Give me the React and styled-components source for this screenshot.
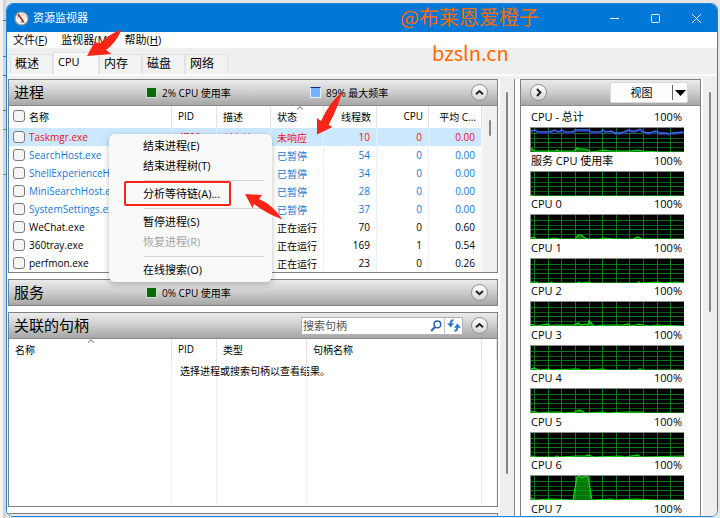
import React from 'react'
import styled, { createGlobalStyle } from 'styled-components';

const processes = [
    { name: 'Taskmgr.exe', pid: '4700', desc: '任务管...', status: '未响应', threads: 10, cpu: 0, avg: '0.00', tone: 'hung' },
    { name: 'SearchHost.exe', status: '已暂停', threads: 54, cpu: 0, avg: '0.00', tone: 'paused' },
    { name: 'ShellExperienceHost.exe', status: '已暂停', threads: 34, cpu: 0, avg: '0.00', tone: 'paused' },
    { name: 'MiniSearchHost.exe', status: '已暂停', threads: 28, cpu: 0, avg: '0.00', tone: 'paused' },
    { name: 'SystemSettings.exe', status: '已暂停', threads: 37, cpu: 0, avg: '0.00', tone: 'paused' },
    { name: 'WeChat.exe', status: '正在运行', threads: 70, cpu: 0, avg: '0.60' },
    { name: '360tray.exe', status: '正在运行', threads: 169, cpu: 1, avg: '0.54' },
    { name: 'perfmon.exe', status: '正在运行', threads: 23, cpu: 0, avg: '0.26' },
]

const graphs = [
    {
        title: 'CPU - 总计',
        line: '0,20 2,22 4,23 24,23 26,22 28,23 43,23 46,20 49,21 53,21 57,22 60,24 74,22 80,23 100,23 107,22 112,23 130,24 153,24',
        frequency: '0,3 4,2 7,4 19,4 21,3 24,2 27,4 31,2 34,4 41,4 45,2 57,2 60,4 69,4 72,2 75,4 80,3 84,5 89,5 93,4 97,2 101,3 105,3 109,1 112,4 118,5 125,3 128,5 135,5 138,6 141,5 153,4',
    },
    { title: '服务 CPU 使用率', line: '0,23 3,24 153,24' },
    { title: 'CPU 0', line: '0,23 3,22 5,24 18,24 23,23 29,24 44,24 47,20 50,20 54,23 58,24 70,24 72,23 84,24 102,24 107,22 111,24 153,24' },
    { title: 'CPU 1', line: '0,23 5,23 7,24 19,24 20,23 22,24 46,24 48,23 50,24 58,23 60,24 106,24 108,23 110,24 128,23 132,24 145,23 153,24' },
    { title: 'CPU 2', line: '0,22 5,24 17,22 19,24 24,23 43,23 47,21 50,23 54,22 57,23 58,19 61,22 63,24 74,23 92,23 97,22 100,24 108,22 112,23 120,24 126,23 153,24' },
    { title: 'CPU 3', line: '0,23 3,22 8,24 18,23 20,24 43,23 48,23 50,24 72,23 76,24 106,24 109,23 112,24 153,24' },
    { title: 'CPU 4', line: '0,22 5,23 7,24 20,23 30,23 33,24 44,23 48,21 51,22 54,24 72,23 76,24 95,23 111,23 113,24 153,24' },
    { title: 'CPU 5', line: '0,23 6,24 24,24 26,23 28,24 46,23 54,23 57,22 60,23 63,24 90,23 94,24 107,22 110,24 153,23' },
    { title: 'CPU 6', line: '0,22 4,24 20,23 42,24 46,1 49,0 51,2 54,0 57,1 61,24 80,23 84,24 104,23 125,24 153,24' },
    { title: 'CPU 7' },
]

function Chevron({ d }) {
    return (
        <svg width="11" height="11" viewBox="0 0 11 11" fill="none" stroke="#222" strokeWidth="2" aria-hidden="true">
            <path d={d} />
        </svg>
    )
}

const up = 'M2 7.2 5.5 4 9 7.2'
const down = 'M2 4 5.5 7.2 9 4'
const right = 'M4 2 7.4 5.5 4 9'

function SortMark() {
    return (
        <Sort width="8" height="4" viewBox="0 0 8 4" fill="none" stroke="#666" aria-hidden="true">
            <path d="M1 3.5 4 .7 7 3.5" />
        </Sort>
    )
}

function Graph({ title, line, frequency }) {
    return (
        <GraphBlock>
            <GraphLabel><span>{title}</span><span>100%</span></GraphLabel>
            {line && (
                <Plot viewBox="0 0 153 24" preserveAspectRatio="none" role="img" aria-label={title}>
                    <rect width="153" height="24" fill="#000" />
                    <path d="M0 10.5H153M0 19.5H153" stroke="#065c12" />
                    <path d="M0 5.5H153M0 14.5H153" stroke="#087a1a" />
                    <path d="M3.5 0V24M17.5 0V24M30.5 0V24M44.5 0V24M58.5 0V24M71.5 0V24M85.5 0V24M98.5 0V24M112.5 0V24M126.5 0V24M139.5 0V24" stroke="#087a1a" />
                    <polygon points={`0,24 ${line} 153,24`} fill="#0a9c12" fillOpacity=".75" />
                    <polyline points={line} fill="none" stroke="#0be00b" strokeWidth="1.2" />
                    {frequency && <polyline points={frequency} fill="none" stroke="#3c1a8c" transform="translate(0 1.5)" />}
                    {frequency && <polyline points={frequency} fill="none" stroke="#2f6df2" strokeWidth="1.4" />}
                </Plot>
            )}
        </GraphBlock>
    )
}

function ContextMenu() {
    return (
        <Menu role="menu">
            <MenuItem role="menuitem">结束进程(E)</MenuItem>
            <MenuItem role="menuitem">结束进程树(T)</MenuItem>
            <Separator />
            <MenuItem role="menuitem" $marked>分析等待链(A)...</MenuItem>
            <Separator />
            <MenuItem role="menuitem">暂停进程(S)</MenuItem>
            <MenuItem role="menuitem" disabled>恢复进程(R)</MenuItem>
            <Separator />
            <MenuItem role="menuitem">在线搜索(O)</MenuItem>
        </Menu>
    )
}

function App() {
    return (
        <Desktop>
            <GlobalStyle />
            <Window>
                <TitleBar>
                    <svg width="15" height="15" viewBox="0 0 15 15" aria-hidden="true">
                        <circle cx="7.5" cy="7.5" r="6.4" fill="#fff" stroke="#a9a09a" strokeWidth="1.3" />
                        <path d="M3 8A4.6 4.6 0 0 1 12 7" fill="none" stroke="#b9b9b9" />
                        <path d="m4 3.4 5.6 7.3" stroke="#c62818" strokeWidth="1.8" />
                        <path d="M6.5 11h3.8" stroke="#555" />
                    </svg>
                    <Title>资源监视器</Title>
                    <WindowButton aria-label="最小化"><svg width="11" height="11" viewBox="0 0 11 11" stroke="#fff" fill="none"><path d="M1 5.5h9" /></svg></WindowButton>
                    <WindowButton aria-label="最大化"><svg width="11" height="11" viewBox="0 0 11 11" stroke="#fff" fill="none"><rect x="1.5" y="1.5" width="8" height="8" rx="1" /></svg></WindowButton>
                    <WindowButton aria-label="关闭"><svg width="11" height="11" viewBox="0 0 11 11" stroke="#fff" fill="none"><path d="m1 1 9 9M10 1 1 10" /></svg></WindowButton>
                </TitleBar>
                <MenuBar>
                    <button>文件(<u>F</u>)</button>
                    <button>监视器(<u>M</u>)</button>
                    <button>帮助(<u>H</u>)</button>
                </MenuBar>
                <Tabs role="tablist">
                    <Tab role="tab">概述</Tab>
                    <Tab role="tab" aria-selected="true" $active>CPU</Tab>
                    <Tab role="tab">内存</Tab>
                    <Tab role="tab">磁盘</Tab>
                    <Tab role="tab">网络</Tab>
                </Tabs>
                <Content>
                    <Lists>
                        <Panel>
                            <PanelHeader>
                                <PanelTitle>进程</PanelTitle>
                                <Meter><Swatch />2% CPU 使用率</Meter>
                                <Meter><Swatch $blue />89% 最大频率</Meter>
                                <RoundButton aria-label="折叠进程"><Chevron d={up} /></RoundButton>
                            </PanelHeader>
                            <ListBody>
                                <Table>
                                    <colgroup>
                                        <col />
                                        <Col $w={45} />
                                        <Col $w={54} />
                                        <Col $w={53} />
                                        <Col $w={53} />
                                        <Col $w={52} />
                                        <Col $w={53} />
                                    </colgroup>
                                    <thead>
                                        <tr>
                                            <NameHead><label><Check type="checkbox" />名称</label></NameHead>
                                            <th>PID</th>
                                            <th>描述</th>
                                            <th>状态<SortMark /></th>
                                            <NumberHead>线程数</NumberHead>
                                            <NumberHead>CPU</NumberHead>
                                            <NumberHead>平均 C...</NumberHead>
                                        </tr>
                                    </thead>
                                    <tbody>
                                        {processes.map((p) => (
                                            <Row key={p.name} $tone={p.tone}>
                                                <NameCell><label><Check type="checkbox" />{p.name}</label></NameCell>
                                                <td>{p.pid}</td>
                                                <td>{p.desc}</td>
                                                <td>{p.status}</td>
                                                <NumberCell>{p.threads}</NumberCell>
                                                <NumberCell>{p.cpu}</NumberCell>
                                                <NumberCell>{p.avg}</NumberCell>
                                            </Row>
                                        ))}
                                    </tbody>
                                </Table>
                                <ListScroll><Thumb $h={16} /></ListScroll>
                            </ListBody>
                        </Panel>
                        <Panel>
                            <PanelHeader $closed>
                                <PanelTitle>服务</PanelTitle>
                                <Meter><Swatch />0% CPU 使用率</Meter>
                                <RoundButton aria-label="展开服务"><Chevron d={down} /></RoundButton>
                            </PanelHeader>
                        </Panel>
                        <Panel>
                            <PanelHeader>
                                <PanelTitle>关联的句柄</PanelTitle>
                                <Search>
                                    <input type="text" placeholder="搜索句柄" aria-label="搜索句柄" />
                                    <button aria-label="搜索">
                                        <svg width="12" height="12" viewBox="0 0 12 12" fill="none" stroke="#2763b8">
                                            <circle cx="7.4" cy="4.4" r="3.3" strokeWidth="1.5" />
                                            <path d="M5 7 1.2 11" strokeWidth="2" />
                                        </svg>
                                    </button>
                                    <button aria-label="刷新">
                                        <svg width="14" height="13" viewBox="0 0 14 13" fill="none" stroke="#2a78c8" strokeWidth="1.9">
                                            <path d="M6.500 1.200Q3.600 1 3.600 5" />
                                            <path d="M.2 4.200h6.800L3.600 8.400Z" fill="#2a78c8" stroke="none" />
                                            <path d="M7.500 11.800Q10.400 12 10.400 8" />
                                            <path d="M7 8.800h6.800L10.400 4.600Z" fill="#2a78c8" stroke="none" />
                                        </svg>
                                    </button>
                                </Search>
                                <RoundButton aria-label="折叠句柄"><Chevron d={up} /></RoundButton>
                            </PanelHeader>
                            <ListBody>
                                <Table $h={167}>
                                    <colgroup>
                                        <col />
                                        <Col $w={45} />
                                        <Col $w={90} />
                                        <Col $w={175} />
                                        <Col $w={15} />
                                    </colgroup>
                                    <thead>
                                        <tr>
                                            <th>名称<SortMark /></th>
                                            <th>PID</th>
                                            <th>类型</th>
                                            <th>句柄名称</th>
                                            <th></th>
                                        </tr>
                                    </thead>
                                    <tbody>
                                        <Row>
                                            <td></td>
                                            <NoteCell>选择进程或搜索句柄以查看结果。</NoteCell>
                                            <td></td>
                                            <td></td>
                                            <td></td>
                                        </Row>
                                        <tr><td></td><td></td><td></td><td></td><td></td></tr>
                                    </tbody>
                                </Table>
                            </ListBody>
                        </Panel>
                        <Panel>
                            <PanelHeader $closed />
                        </Panel>
                    </Lists>
                    <ScrollStrip><Thumb $h={382} /></ScrollStrip>
                    <Side>
                        <SidePanel>
                            <PanelHeader>
                                <RoundButton aria-label="隐藏图形"><Chevron d={right} /></RoundButton>
                                <ViewSplit>
                                    <ViewButton>视图</ViewButton>
                                    <ViewArrow aria-label="视图选项">
                                        <svg width="11" height="6" viewBox="0 0 11 6" aria-hidden="true"><path d="M0 0h11L5.5 6Z" /></svg>
                                    </ViewArrow>
                                </ViewSplit>
                            </PanelHeader>
                            <Graphs>
                                {graphs.map((g) => <Graph key={g.title} {...g} />)}
                            </Graphs>
                        </SidePanel>
                        <ScrollStrip><Thumb $h={220} /></ScrollStrip>
                    </Side>
                </Content>
            </Window>
            <ContextMenu />
            <Arrows viewBox="0 0 300 220" fill="#fb2416" aria-hidden="true">
                <path d="M87 56 94.500 42 100 43.500Q109 34 121.500 29.500 116 43 106 50l5.500 4Z" />
                <path d="M342 92Q329 103 321 121l-4-3v16.500l15.500-7.500-4-2Q337 110 342 92Z" />
                <path d="M245 194l17 1-3 4Q273 205 282.500 219.500 267 214 254 204l-1.500 4Z" />
            </Arrows>
            <Watermark>
                <span>@布莱恩爱橙子</span>
                <WatermarkSite>bzsln.cn</WatermarkSite>
            </Watermark>
        </Desktop>
    )
}

export default App


const GlobalStyle = createGlobalStyle`
*, *::after {
    box-sizing: border-box;
}
body {
    margin: 0;
    background: #e9e9e9;
    font-family: "Open Sans", "Noto Sans CJK SC", sans-serif;
    font-size: 11px;
    color: #000;
}
button {
    border: 0;
    padding: 0;
    background: none;
    font: inherit;
    color: inherit;
    white-space: nowrap;
}
`;

const Desktop = styled.div`
position: relative;
height: 100vh;
padding: 3px 2px 1px 6px;
overflow: hidden;
background: linear-gradient(#2a86c8 0 1px, transparent 1px) 3px 20px / 3px 36px no-repeat,
    linear-gradient(#2a86c8 0 1px, transparent 1px) 3px 56px / 3px 10px no-repeat,
    linear-gradient(#8a4bb0 0 1px, transparent 1px) 3px 75px / 3px 10px no-repeat,
    linear-gradient(#8a4bb0 0 1px, transparent 1px) 3px 110px / 3px 10px no-repeat,
    linear-gradient(#5aa63c 0 1px, transparent 1px) 3px 129px / 3px 10px no-repeat,
    linear-gradient(#5aa63c 0 1px, transparent 1px) 3px 174px / 3px 10px no-repeat,
    linear-gradient(90deg, #f2f2f2 0 3px, #d4d4d4 3px 6px, #e6e6e6 6px);
`;

const Window = styled.div`
height: 100%;
display: flex;
flex-direction: column;
overflow: hidden;
border: 1px solid #1e86d8;
border-radius: 7px;
background: #efefef;
`;

const TitleBar = styled.header`
flex: 0 0 28px;
display: flex;
align-items: center;
padding-left: 7px;
background: #0078d7;
color: #fff;
`;

const Title = styled.h1`
flex: 1;
margin: 0 0 0 4px;
padding-bottom: 2px;
font-size: 11px;
font-weight: 400;
`;

const WindowButton = styled.button`
width: 41px;
height: 28px;
display: flex;
align-items: center;
justify-content: center;
`;

const MenuBar = styled.nav`
flex: 0 0 16px;
display: flex;
align-items: center;
gap: 14px;
padding-left: 6px;
background: #fff;
line-height: 16px;
`;

const Tabs = styled.div`
flex: 0 0 27px;
display: flex;
align-items: flex-end;
padding: 4px 3px 0;
border-bottom: 2px solid #fcfcfc;
`;

const Tab = styled.button`
height: ${p => p.$active ? 22 : 20}px;
width: ${p => p.$active ? 46 : 43}px;
padding: 0 4px ${p => p.$active ? 4 : 2}px;
border: 1px solid #e2e2e2;
border-bottom: 0;
background: ${p => p.$active ? '#fafafa' : '#f2f2f2'};
font-size: ${p => p.$active ? 11 : 12}px;
line-height: 16px;
text-align: left;
`;

const Content = styled.main`
flex: 1;
min-height: 0;
display: flex;
padding-top: 3px;
`;

const Lists = styled.div`
flex: 1;
min-width: 0;
display: flex;
flex-direction: column;
gap: 6px;
padding: 0 2px 0 1px;
background: #fff;
overflow: hidden;
`;

const Panel = styled.section`
flex: none;
border: 1px solid #808080;
background: #fff;
`;

const PanelHeader = styled.div`
height: ${p => p.$closed ? 25 : 26}px;
display: flex;
align-items: center;
padding: 0 9px 0 5px;
background: linear-gradient(#ebebeb, #d0d0d0 45%, #a6a6a6);
border-bottom: ${p => p.$closed ? 0 : 1}px solid #8c8c8c;
`;

const PanelTitle = styled.h2`
flex: 0 0 132px;
margin: 0;
padding-bottom: 2px;
font-size: 15px;
font-weight: 400;
line-height: 22px;
white-space: nowrap;
`;

const Meter = styled.div`
flex: 0 0 164px;
display: flex;
align-items: center;
gap: 5px;
padding-bottom: 1px;
font-size: 10px;
white-space: nowrap;

& + & {
    flex-basis: auto;
}
`;

const Swatch = styled.span`
width: 11px;
height: 11px;
border: 1px solid ${p => p.$blue ? '#e8f2ff' : '#cfe0cf'};
border-top-color: ${p => p.$blue ? '#0a2a86' : '#cfe0cf'};
background: ${p => p.$blue ? '#72b3ff' : '#066b0c'};
`;

const RoundButton = styled.button`
flex: none;
width: 17px;
height: 17px;
display: flex;
align-items: center;
justify-content: center;
border: 1px solid #8d8d8d;
border-radius: 50%;
background: linear-gradient(#fff, #d6d6d6);

&:last-child {
    margin-left: auto;
}
`;

const ListBody = styled.div`
display: flex;
`;

const ListScroll = styled.div`
flex: 0 0 15px;
padding: 14px 6px 0;
border-left: 1px solid #f6f6f6;
background: #f0f0f0;
`;

const Thumb = styled.div`
width: 2px;
height: ${p => p.$h}px;
border-radius: 1px;
background: #858585;
`;

const Col = styled.col`
width: ${p => p.$w}px;
`;

const Table = styled.table`
flex: 1;
width: 100%;
height: ${p => p.$h ? p.$h + 'px' : 'auto'};
table-layout: fixed;
border-collapse: separate;
border-spacing: 0;
font-size: 10px;

th, td {
    position: relative;
    padding: 0 0 0 6px;
    border-right: 1px solid #e6f1fb;
    font-weight: 400;
    text-align: left;
    white-space: nowrap;
    overflow: hidden;
}
th {
    height: 22px;
    padding-bottom: 2px;
    border-right-color: #e4e4e4;
}
td:last-child {
    border-right-color: #eef5fb;
}
label {
    display: flex;
    align-items: center;
    gap: 4px;
}
`;

const NameHead = styled.th`
&& {
    padding-left: 4px;
}
`;

const NameCell = styled.td`
&& {
    padding-left: 4px;
}
`;

const NumberHead = styled.th`
&&& {
    padding: 0 5px 2px 0;
    text-align: right;
}
`;

const NumberCell = styled.td`
&&& {
    padding: 0 6px 0 0;
    text-align: right;
}
`;

const NoteCell = styled.td`
&&& {
    padding-left: 8px;
    overflow: visible;
}
`;

const tones = { hung: '#ee1020', paused: '#1478d4' }

const Row = styled.tr`
height: 18px;
background: ${p => p.$tone === 'hung' ? '#cce8ff' : 'transparent'};
color: ${p => tones[p.$tone] || '#000'};
`;

const Check = styled.input`
appearance: none;
flex: none;
width: 12px;
height: 12px;
margin: 0;
border: 1px solid #7c7c7c;
border-radius: 3px;
background: #f5f5f5;
`;

const Sort = styled.svg`
position: absolute;
top: 0;
left: 48%;
`;

const Search = styled.div`
width: 162px;
height: 18px;
display: flex;
align-items: center;
margin-left: auto;
border: 1px solid #b4b4b4;
background: #fff;

input {
    flex: 1;
    min-width: 0;
    padding: 0 1px;
    border: 0;
    outline: 0;
    background: none;
    font: inherit;
}
input::placeholder {
    color: #555;
}
button {
    width: 16px;
    height: 16px;
    display: flex;
    align-items: center;
    justify-content: center;
}
button + button {
    width: 18px;
    border-left: 1px solid #c4c4c4;
}
& + ${RoundButton} {
    margin-left: 8px;
}
`;

const ScrollStrip = styled.div`
flex: 0 0 14px;
padding: 13px 6px 0;
background: #eee;
`;

const Side = styled.aside`
flex: 0 0 203px;
display: flex;
gap: 2px;
padding-left: 5px;
border-left: 1px solid #8a8a8a;
background: #fff;
`;

const SidePanel = styled.section`
flex: 1;
border: 1px solid #808080;
border-bottom: 0;
overflow: hidden;

${PanelHeader} {
    padding: 0 12px 0 9px;
}
`;

const ViewSplit = styled.div`
display: flex;
width: 78px;
height: 21px;
margin-left: auto;
border: 1px solid #d8d8d8;
border-radius: 2px;
background: #fdfdfd;
`;

const ViewButton = styled.button`
flex: 1;
padding-bottom: 2px;
`;

const ViewArrow = styled.button`
width: 15px;
margin: 2px 0;
display: flex;
align-items: center;
justify-content: center;
border-left: 1px solid #666;
`;

const Graphs = styled.div`
display: grid;
grid-auto-rows: 44px 43px;
padding: 3px 16px 0 9px;
`;

const GraphBlock = styled.div`
display: flex;
flex-direction: column;
gap: 2px;
`;

const GraphLabel = styled.div`
display: flex;
justify-content: space-between;
padding: 0 2px 0 1px;
line-height: 16px;
`;

const Plot = styled.svg`
width: 100%;
height: 25px;
border-top: 1px solid #8c8c8c;
border-left: 1px solid #8c8c8c;
`;

const Menu = styled.div`
position: absolute;
top: 134px;
left: 109px;
width: 163px;
padding: 2px 0;
border-radius: 6px;
background: #f9f9f9;
box-shadow: 0 2px 6px rgba(0, 0, 0, 0.25);
`;

const MenuItem = styled.button`
display: block;
position: relative;
width: 100%;
height: 20px;
padding-left: 34px;
line-height: 20px;
text-align: left;

&:disabled {
    color: #a3a3a3;
}
&::after {
    content: "";
    display: ${p => p.$marked ? 'block' : 'none'};
    position: absolute;
    top: -3px;
    left: 15px;
    width: 107px;
    height: 25px;
    border: 2px solid #fb2416;
    border-radius: 2px;
}
`;

const Separator = styled.hr`
height: 1px;
margin: 4px 8px 3px 35px;
border: 0;
background: #d2d2d2;
`;

const Arrows = styled.svg`
position: absolute;
top: 0;
left: 0;
width: 300px;
height: 220px;
overflow: visible;
pointer-events: none;
`;

const Watermark = styled.div`
position: absolute;
top: 3px;
left: 400px;
display: flex;
flex-direction: column;
color: #ff6a00;
font-family: "Noto Sans CJK SC", sans-serif;
font-size: 20px;
line-height: 28px;
pointer-events: none;
`;

const WatermarkSite = styled.span`
padding: 8px 0 0 32px;
`;
